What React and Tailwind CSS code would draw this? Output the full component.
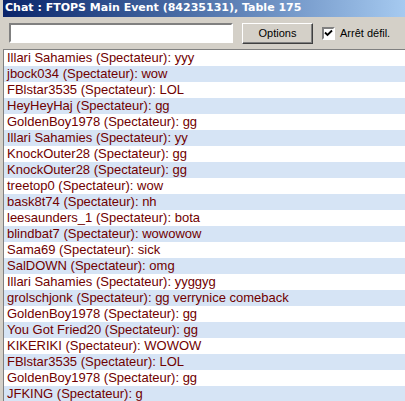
import React from "react";

const messages = [
  ["Illari Sahamies", "yyy"],
  ["jbock034", "wow"],
  ["FBlstar3535", "LOL"],
  ["HeyHeyHaj", "gg"],
  ["GoldenBoy1978", "gg"],
  ["Illari Sahamies", "yy"],
  ["KnockOuter28", "gg"],
  ["KnockOuter28", "gg"],
  ["treetop0", "wow"],
  ["bask8t74", "nh"],
  ["leesaunders_1", "bota"],
  ["blindbat7", "wowowow"],
  ["Sama69", "sick"],
  ["SalDOWN", "omg"],
  ["Illari Sahamies", "yyggyg"],
  ["grolschjonk", "gg verrynice comeback"],
  ["GoldenBoy1978", "gg"],
  ["You Got Fried20", "gg"],
  ["KIKERIKI", "WOWOW"],
  ["FBlstar3535", "LOL"],
  ["GoldenBoy1978", "gg"],
  ["JFKING", "g"],
];

export default function App() {
  return (
    <div className="w-[405px] h-[401px] overflow-hidden bg-[#d4d0c8] pl-[3px] flex flex-col font-['Liberation_Sans',Arial,sans-serif]">
      <div className="h-[17px] shrink-0 bg-gradient-to-r from-[#0a246a] to-[#a6caf0] flex items-center pl-[2px] text-white text-[11px] font-bold font-['DejaVu_Sans',Tahoma,sans-serif]">
        Chat : FTOPS Main Event (84235131), Table 175
      </div>
      <div className="h-[32px] shrink-0 flex items-center pl-[6px]">
        <input
          className="w-[224px] h-[20px] bg-white border-2 border-t-[#808080] border-l-[#808080] border-b-white border-r-white outline-none"
          type="text"
        />
        <button className="ml-[9px] w-[71px] h-[21px] bg-[#d4d0c8] border border-t-white border-l-white border-b-[#404040] border-r-[#404040] shadow-[inset_-1px_-1px_0_#808080] text-[11px] text-black leading-none">
          Options
        </button>
        <span className="ml-[9px] w-[13px] h-[13px] bg-white border-2 border-t-[#808080] border-l-[#808080] border-b-white border-r-white flex items-center justify-center">
          <svg width="9" height="9" viewBox="0 0 9 9">
            <path d="M1 3.5 L3.5 6 L8 1.5" stroke="black" strokeWidth="1.8" fill="none" />
          </svg>
        </span>
        <span className="ml-[5px] text-[11px] text-black">Arrêt défil.</span>
      </div>
      <div className="flex-1 bg-white border-l border-t border-[#808080]">
        {messages.map(([name, text], i) => (
          <div
            key={i}
            className={`h-[16px] pl-[3px] text-[13px] leading-[16px] text-[#700000] whitespace-nowrap ${i % 2 ? "bg-[#d6e4f5]" : "bg-white"}`}
          >
            {name} (Spectateur): {text}
          </div>
        ))}
      </div>
    </div>
  );
}
